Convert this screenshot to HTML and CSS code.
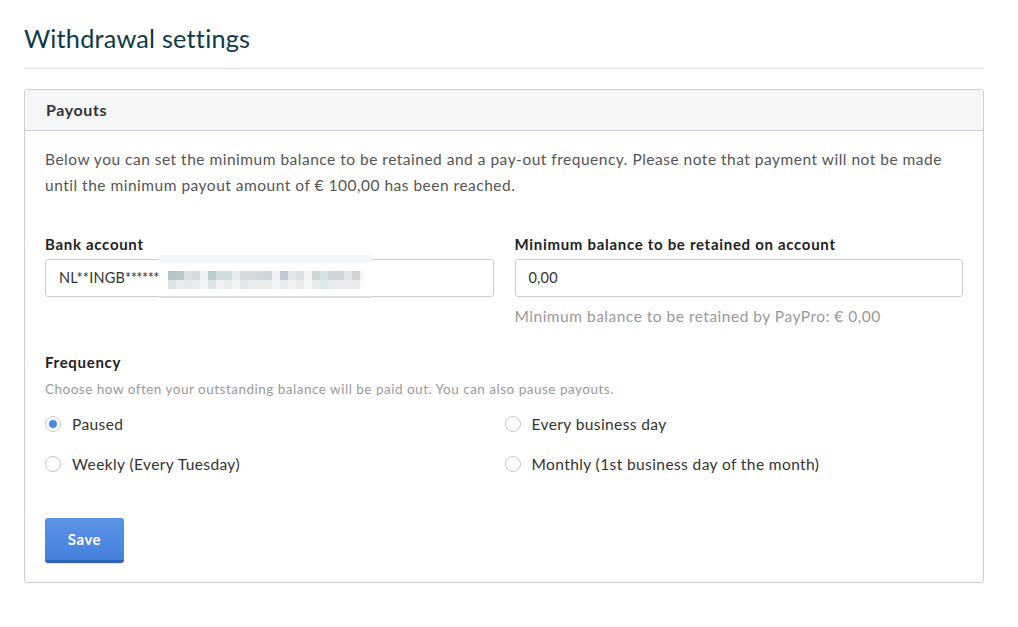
FILE: index.html
```html
<!DOCTYPE html>
<html lang="en">
<head>
<meta charset="utf-8">
<title>Withdrawal settings</title>
<link rel="stylesheet" href="styles.css">
</head>
<body>
<div class="page">
  <h1 class="title">Withdrawal settings</h1>
  <hr class="rule">
  <div class="card">
    <div class="card-head">Payouts</div>
    <div class="card-body">
      <p class="intro">Below you can set the minimum balance to be retained and a pay-out frequency. Please note that payment will not be made until the minimum payout amount of € 100,00 has been reached.</p>
      <div class="fields">
        <div class="field">
          <label class="label">Bank account</label>
          <div class="input-wrap">
            <div class="input">NL**INGB<span class="stars">********</span></div>
            <div class="blur"><div class="blur-row r1"></div><div class="blur-row r2"></div></div>
          </div>
        </div>
        <div class="field">
          <label class="label">Minimum balance to be retained on account</label>
          <div class="input">0,00</div>
          <div class="hint">Minimum balance to be retained by PayPro: € 0,00</div>
        </div>
      </div>
      <div class="freq">
        <div class="label">Frequency</div>
        <div class="small-hint">Choose how often your outstanding balance will be paid out. You can also pause payouts.</div>
        <div class="radios">
          <div class="radio"><span class="dot checked"></span>Paused</div>
          <div class="radio"><span class="dot"></span>Every business day</div>
          <div class="radio"><span class="dot"></span>Weekly (Every Tuesday)</div>
          <div class="radio"><span class="dot"></span>Monthly (1st business day of the month)</div>
        </div>
      </div>
      <button class="save">Save</button>
    </div>
  </div>
</div>
</body>
</html>
```
FILE: styles.css
```css
* { box-sizing: border-box; }
html, body { margin: 0; padding: 0; background: #fff; }
body { font-family: "Lato", "Open Sans", sans-serif; color: #333; }
.page { padding: 20px 34px 0 24px; width: 1018px; }
.title { margin: 0; font-weight: 400; font-size: 25.3px; line-height: 36px; color: #0d3a4a; letter-spacing: 0.2px; }
.rule { border: 0; border-top: 1px solid #dfe1e4; margin: 12px 0 20px 0; }
.card { border: 1px solid #cdd1d6; border-radius: 3px; }
.card-head { background: #f5f6f8; border-bottom: 1px solid #cdd1d6; height: 41px; padding: 0 21px; font-weight: 700; font-size: 16px; letter-spacing: 0.6px; line-height: 40px; color: #333; }
.card-body { padding: 15px 20px 19px 20px; }
.intro { margin: 0; font-size: 15.5px; letter-spacing: 0.5px; line-height: 26px; color: #555; }
.fields { display: grid; grid-template-columns: 1fr 1fr; column-gap: 21px; margin-top: 37px; }
.label { display: block; font-weight: 700; font-size: 15px; letter-spacing: 0.7px; line-height: 18px; color: #222; margin-bottom: 6px; }
.input { height: 38px; border: 1px solid #c9ced3; border-radius: 3px; padding: 0 13px; font-size: 14.5px; letter-spacing: 0.2px; line-height: 36px; color: #333; background: #fff; }
.stars { letter-spacing: -0.5px; }
.input-wrap { position: relative; }
.blur { position: absolute; left: 114px; top: -4px; width: 213px; height: 43px; background: #fff; border-top: 8px solid #f5f6f8; border-bottom: 2px solid #dcdfe3; padding: 8px 0 0 9px; }
.blur-row { height: 9px; width: 195px; }
.r1 { background: linear-gradient(90deg, #b5c3c6 0 8px, #b9c9c6 8px 16px, #d9dee3 16px 24px, #d5d9de 24px 32px, #eef0f3 32px 40px, #b9cdd0 40px 48px, #d0dcdc 48px 56px, #cfdadd 56px 64px, #e6eaec 64px 72px, #d3d8dc 72px 80px, #d3d9dc 80px 88px, #d1d8dd 88px 96px, #cbd6dd 96px 104px, #eef0f2 104px 112px, #bfc9d0 112px 120px, #e2e6e9 120px 128px, #d9dfe2 128px 136px, #f3f4f2 136px 144px, #cfd6d6 144px 152px, #cfe3e3 152px 160px, #d3d3dd 160px 168px, #d0d3d9 168px 176px, #dfe3ea 176px 184px, #d1d2d6 184px 192px, #f1f5f7 192px 200px); }
.r2 { background: linear-gradient(90deg, #dde3e5 0 8px, #e9edee 8px 16px, #e6e9ec 16px 24px, #e9ecef 24px 32px, #f3f4f7 32px 40px, #dde4e6 40px 48px, #eef2f0 48px 56px, #e8edee 56px 64px, #f2f5f5 64px 72px, #e2e6e9 72px 80px, #e9ecee 80px 88px, #eaedee 88px 96px, #e9ecef 96px 104px, #f2f3f4 104px 112px, #e7eaed 112px 120px, #f1f2f3 120px 128px, #e6eaed 128px 136px, #f5f6f6 136px 144px, #e7ebec 144px 152px, #dfe9e9 152px 160px, #e9eaee 160px 168px, #e9ebee 168px 176px, #ebecef 176px 184px, #e9eaed 184px 192px, #fafbfb 192px 200px); }
.hint { margin-top: 9px; font-size: 15.5px; letter-spacing: 0.5px; line-height: 20px; color: #999; }
.freq { margin-top: 27px; }
.freq .label { margin-bottom: 9px; }
.small-hint { font-size: 13.5px; letter-spacing: 0.5px; line-height: 18px; color: #9a9a9a; }
.radios { display: grid; grid-template-columns: 1fr 1fr; column-gap: 21px; row-gap: 18px; margin-top: 15px; }
.radio { display: flex; align-items: center; font-size: 15.5px; letter-spacing: 0.4px; line-height: 22px; color: #333; }
.dot { width: 16px; height: 16px; border: 1px solid #c6cacf; border-radius: 50%; margin-right: 11px; background: #fff; position: relative; }
.dot.checked::after { content: ""; position: absolute; left: 3px; top: 3px; width: 8px; height: 8px; border-radius: 50%; background: #4a86e0; }
.radios .radio:nth-child(even) { margin-left: -10px; }
.save { margin-top: 43px; width: 79px; height: 45px; border: 0; border-bottom: 3px solid #2f64b3; border-radius: 3px; background: linear-gradient(#5b93e6, #4480dd); color: #fff; font-family: inherit; font-weight: 700; font-size: 15px; letter-spacing: 0.5px; padding: 0; box-shadow: 0 1px 1px rgba(0,0,0,0.1); }
```
